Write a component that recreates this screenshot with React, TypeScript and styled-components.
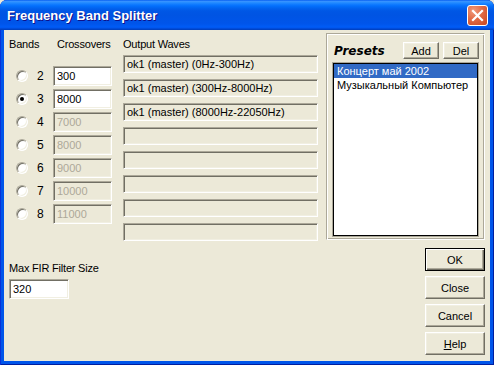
import React from 'react';
import styled, { createGlobalStyle } from 'styled-components';

const GlobalStyle = createGlobalStyle`
  html, body {
    margin: 0;
    padding: 0;
    background: #ece9d8;
  }
  body {
    font-family: "Liberation Sans", Arial, sans-serif;
    font-size: 11px;
    color: #000;
  }
`;

const bands = [
  { n: 2, value: '300', enabled: true },
  { n: 3, value: '8000', enabled: true },
  { n: 4, value: '7000', enabled: false },
  { n: 5, value: '8000', enabled: false },
  { n: 6, value: '9000', enabled: false },
  { n: 7, value: '10000', enabled: false },
  { n: 8, value: '11000', enabled: false },
];

const waves = [
  'ok1 (master) (0Hz-300Hz)',
  'ok1 (master) (300Hz-8000Hz)',
  'ok1 (master) (8000Hz-22050Hz)',
  '',
  '',
  '',
  '',
  '',
];

const presets = ['Концерт май 2002', 'Музыкальный Компьютер'];

const App: React.FC = () => {
  return (
    <>
      <GlobalStyle />
      <Window>
        <TitleBar>
          <Title>Frequency Band Splitter</Title>
          <CloseButton>
            <svg width="13" height="13" viewBox="0 0 13 13">
              <path d="M2 2 L11 11 M11 2 L2 11" stroke="#fff" strokeWidth="2.2" strokeLinecap="square" />
            </svg>
          </CloseButton>
        </TitleBar>

        <Client>
          <LeftPane>
            <TopRow>
              <BandsColumn>
                <BandsHeader>
                  <HeaderLabel $width={44}>Bands</HeaderLabel>
                  <HeaderLabel $indent={4}>Crossovers</HeaderLabel>
                </BandsHeader>
                <BandList>
                  {bands.map(b => (
                    <BandRow key={b.n}>
                      <Radio $checked={b.n === 3} />
                      <BandNumber>{b.n}</BandNumber>
                      <TextBox $disabled={!b.enabled}>{b.value}</TextBox>
                    </BandRow>
                  ))}
                </BandList>
              </BandsColumn>

              <OutputColumn>
                <HeaderLabel>Output Waves</HeaderLabel>
                <WaveList>
                  {waves.map((w, i) => (
                    <WaveBox key={i}>{w}</WaveBox>
                  ))}
                </WaveList>
              </OutputColumn>
            </TopRow>

            <FirBlock>
              <HeaderLabel>Max FIR Filter Size</HeaderLabel>
              <FirInput>320</FirInput>
            </FirBlock>
          </LeftPane>

          <RightPane>
            <PresetsGroup>
              <PresetsHeader>
                <PresetsTitle>Presets</PresetsTitle>
                <SmallButton>Add</SmallButton>
                <SmallButton>Del</SmallButton>
              </PresetsHeader>
              <ListBox>
                {presets.map((p, i) => (
                  <ListItem key={p} $selected={i === 0}>
                    {p}
                  </ListItem>
                ))}
              </ListBox>
            </PresetsGroup>

            <ButtonColumn>
              <DialogButton $default>OK</DialogButton>
              <DialogButton>Close</DialogButton>
              <DialogButton>Cancel</DialogButton>
              <DialogButton>
                <u>H</u>elp
              </DialogButton>
            </ButtonColumn>
          </RightPane>
        </Client>
      </Window>
    </>
  );
};

const Window = styled.div`
  width: 494px;
  height: 365px;
  display: flex;
  flex-direction: column;
  background: #0055ea;
  border-radius: 7px 7px 0 0;
  box-shadow: inset 1px 0 #0831d9, inset -1px 0 #001ea0, inset 0 -1px #001ea0;
  overflow: hidden;
`;

const TitleBar = styled.div`
  height: 30px;
  flex-shrink: 0;
  display: flex;
  align-items: center;
  justify-content: space-between;
  padding: 0 6px 0 7px;
  box-sizing: border-box;
  background: linear-gradient(
    to bottom,
    #0058ee 0%,
    #3a93ff 4%,
    #288eff 8%,
    #127dff 14%,
    #036ffc 20%,
    #0262ee 28%,
    #0057e5 36%,
    #0054e3 50%,
    #0055eb 80%,
    #005bf5 88%,
    #0058f0 92%,
    #0048d4 96%,
    #003db8 100%
  );
`;

const Title = styled.span`
  font-family: "Liberation Sans", Arial, sans-serif;
  font-weight: bold;
  font-size: 13px;
  color: #fff;
  text-shadow: 1px 1px #0f1089;
  margin-top: 1px;
`;

const CloseButton = styled.div`
  width: 21px;
  height: 21px;
  box-sizing: border-box;
  border: 1px solid #fff;
  border-radius: 3px;
  display: flex;
  align-items: center;
  justify-content: center;
  background: radial-gradient(circle at 30% 25%, #f09a7c 0%, #e16a45 45%, #c8461f 100%);
  margin-top: 1px;
`;

const Client = styled.div`
  flex: 1;
  margin: 0 4px 4px;
  background: #ece9d8;
  display: flex;
  gap: 8px;
  padding: 3px 5px 0 5px;
`;

const LeftPane = styled.div`
  width: 309px;
  display: flex;
  flex-direction: column;
  padding-top: 5px;
`;

const TopRow = styled.div`
  display: flex;
  gap: 11px;
  align-items: flex-start;
`;

const HeaderLabel = styled.div<{ $indent?: number; $width?: number }>`
  height: 13px;
  line-height: 13px;
  padding-left: ${p => p.$indent || 0}px;
  ${p => (p.$width ? `width: ${p.$width}px; flex-shrink: 0;` : '')}
  font-size: 11px;
  letter-spacing: -0.2px;
  white-space: nowrap;
`;

const BandsColumn = styled.div`
  width: 103px;
  display: flex;
  flex-direction: column;
  gap: 15px;
`;

const BandsHeader = styled.div`
  display: flex;
`;

const BandList = styled.div`
  display: flex;
  flex-direction: column;
  gap: 3px;
`;

const BandRow = styled.div`
  display: flex;
  align-items: center;
  height: 20px;
  padding-left: 7px;
`;

const Radio = styled.span<{ $checked?: boolean }>`
  position: relative;
  flex-shrink: 0;
  width: 12px;
  height: 12px;
  box-sizing: border-box;
  border-radius: 50%;
  background: #fff;
  border: 1px solid;
  border-color: #aca899 #fff #fff #aca899;
  box-shadow: inset 1px 1px 0 #716f64, inset -1px -1px 0 #f1efe2;

  &::after {
    content: '';
    display: ${p => (p.$checked ? 'block' : 'none')};
    position: absolute;
    left: 3px;
    top: 3px;
    width: 4px;
    height: 4px;
    border-radius: 50%;
    background: #000;
  }
`;

const BandNumber = styled.span`
  width: 16px;
  padding-left: 9px;
  font-size: 12px;
`;

const sunken = `
  box-sizing: border-box;
  border: 1px solid;
  border-color: #aca899 #fff #fff #aca899;
  box-shadow: inset 1px 1px 0 #716f64, inset -1px -1px 0 #f1efe2;
`;

const TextBox = styled.div<{ $disabled?: boolean }>`
  ${sunken}
  width: 59px;
  height: 20px;
  padding: 0 3px;
  line-height: 18px;
  font-size: 11px;
  background: ${p => (p.$disabled ? '#ece9d8' : '#fff')};
  color: ${p => (p.$disabled ? '#aca899' : '#000')};
`;

const OutputColumn = styled.div`
  width: 195px;
  display: flex;
  flex-direction: column;
  gap: 4px;
`;

const WaveList = styled.div`
  display: flex;
  flex-direction: column;
  gap: 6px;
`;

const WaveBox = styled.div`
  ${sunken}
  height: 18px;
  padding: 0 3px;
  line-height: 16px;
  font-size: 11px;
  white-space: nowrap;
  background: #ece9d8;
`;

const FirBlock = styled.div`
  margin-top: 21px;
  display: flex;
  flex-direction: column;
  gap: 4px;
`;

const FirInput = styled(TextBox)`
  width: 60px;
  background: #fff;
  color: #000;
`;

const RightPane = styled.div`
  width: 159px;
  display: flex;
  flex-direction: column;
  align-items: flex-end;
`;

const PresetsGroup = styled.div`
  width: 159px;
  height: 207px;
  box-sizing: border-box;
  border: 1px solid;
  border-color: #aca899 #fff #fff #aca899;
  box-shadow: inset 1px 1px 0 #fff, inset -1px -1px 0 #aca899;
  display: flex;
  flex-direction: column;
  padding: 8px 5px 3px 5px;
  gap: 4px;
`;

const PresetsHeader = styled.div`
  display: flex;
  align-items: center;
  gap: 4px;
  height: 17px;
`;

const PresetsTitle = styled.span`
  flex: 1;
  padding-left: 2px;
  font-family: "DejaVu Sans", Verdana, sans-serif;
  font-weight: bold;
  font-style: italic;
  font-size: 12px;
`;

const raised = `
  box-sizing: border-box;
  background: #ece9d8;
  border: 1px solid;
  border-color: #fff #716f64 #716f64 #fff;
  box-shadow: inset -1px -1px 0 #aca899, inset 1px 1px 0 #f1efe2;
  display: flex;
  align-items: center;
  justify-content: center;
  font-size: 11px;
`;

const SmallButton = styled.div`
  ${raised}
  width: 36px;
  height: 17px;
`;

const ListBox = styled.div`
  flex: 1;
  margin: 0 1px;
  background: #fff;
  border: 1px solid #000;
  box-shadow: 0 0 0 1px #aca899;
  display: flex;
  flex-direction: column;
`;

const ListItem = styled.div<{ $selected?: boolean }>`
  height: 14px;
  line-height: 14px;
  padding-left: 3px;
  font-size: 11px;
  white-space: nowrap;
  background: ${p => (p.$selected ? '#316ac5' : 'transparent')};
  color: ${p => (p.$selected ? '#fff' : '#000')};
`;

const ButtonColumn = styled.div`
  margin-top: 8px;
  display: flex;
  flex-direction: column;
  gap: 5px;
`;

const DialogButton = styled.div<{ $default?: boolean }>`
  ${raised}
  width: 60px;
  height: 23px;
  ${p =>
    p.$default &&
    `
    border: 1px solid #000;
    box-shadow: inset 1px 1px 0 #fff, inset -1px -1px 0 #716f64, inset -2px -2px 0 #aca899;
  `}
`;

export default App;
